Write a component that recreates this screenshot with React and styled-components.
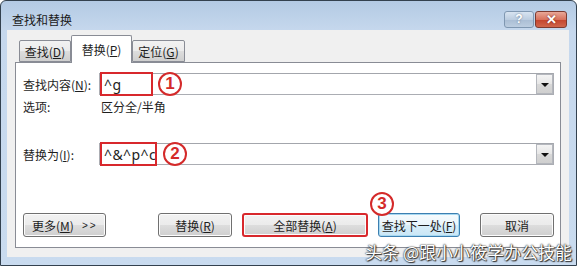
import React from "react"
import styled, { createGlobalStyle } from "styled-components"

const GlobalStyle = createGlobalStyle`
  html, body {
    margin: 0;
    padding: 0;
    background: #ffffff;
  }
  body {
    font-family: "Noto Sans CJK SC", "Noto Sans", sans-serif;
    font-size: 12px;
    color: #1e1e1e;
  }
`

const Window = styled.div`
  position: relative;
  width: 577px;
  height: 266px;
  box-sizing: border-box;
  display: flex;
  flex-direction: column;
  background: linear-gradient(#b3cae4, #c6d8ed 30px, #c9dbef);
  border: 1px solid #33414f;
  border-radius: 6px 6px 0 0;
  overflow: hidden;
`

const TitleBar = styled.div`
  height: 29px;
  box-sizing: border-box;
  padding: 7px 9px 0 11px;
  display: flex;
  align-items: center;
  flex-shrink: 0;
`

const Title = styled.div`
  flex: 1;
  font-size: 12px;
  color: #1a1a1a;
`

const CaptionButton = styled.div`
  width: ${p => (p.$close ? 32 : 30)}px;
  height: 17px;
  box-sizing: border-box;
  border: 1px solid ${p => (p.$close ? "#7d3a30" : "#7f97b1")};
  border-radius: 3px;
  margin-left: 1px;
  display: flex;
  align-items: center;
  justify-content: center;
  color: #ffffff;
  font-family: "Liberation Sans", sans-serif;
  font-weight: bold;
  font-size: ${p => (p.$close ? 13 : 12)}px;
  background: ${p =>
    p.$close
      ? "linear-gradient(#e9a898, #d8725d 50%, #c4432c 51%, #d0664c)"
      : "linear-gradient(#d8e4f1, #bccde0 50%, #a9bdd4 51%, #bccde0)"};
  text-shadow: 0 0 2px ${p => (p.$close ? "#6b1e10" : "#5b7089")};
`

const Client = styled.div`
  flex: 1;
  margin: 0 7px 8px 6px;
  padding: 5px 8px 9px 8px;
  background: #f0f0f0;
  display: flex;
  flex-direction: column;
`

const TabRow = styled.div`
  display: flex;
  align-items: flex-end;
  height: 27px;
  padding-left: 4px;
`

const Tab = styled.div`
  position: relative;
  width: ${p => p.$w}px;
  height: ${p => (p.$active ? 28 : 22)}px;
  margin-bottom: ${p => (p.$active ? -1 : 0)}px;
  z-index: ${p => (p.$active ? 1 : 0)};
  box-sizing: border-box;
  border: 1px solid #898c95;
  border-bottom: ${p => (p.$active ? "none" : "1px solid #898c95")};
  border-radius: 2px 2px 0 0;
  display: flex;
  align-items: center;
  justify-content: center;
  font-size: 12px;
  background: ${p =>
    p.$active
      ? "#ffffff"
      : "linear-gradient(#f2f2f2, #ebebeb 50%, #dddddd 51%, #cfcfcf)"};
  padding-top: ${p => (p.$active ? 0 : 1)}px;
`

const Panel = styled.div`
  height: 186px;
  box-sizing: border-box;
  border: 1px solid #898c95;
  background: #ffffff;
  padding: 10px 6px 0 7px;
  display: flex;
  flex-direction: column;
`

const FieldRow = styled.div`
  display: grid;
  grid-template-columns: 76px 1fr;
  align-items: center;
  margin-top: ${p => p.$top || 0}px;
`

const Label = styled.div`
  font-size: 12px;
  white-space: nowrap;
`

const Combo = styled.div`
  position: relative;
  height: 22px;
  box-sizing: border-box;
  border: 1px solid #abadb3;
  border-top-color: #a3a6ac;
  display: flex;
  align-items: center;
`

const Mark = styled.div`
  width: ${p => p.$w}px;
  height: 24px;
  box-sizing: border-box;
  border: 2px solid #d8282c;
  padding-left: 2px;
  display: flex;
  align-items: center;
  overflow: hidden;
  white-space: nowrap;
  font-family: "Noto Sans", sans-serif;
  font-size: 14px;
  letter-spacing: 0.4px;
  color: #222;
`

const Circle = styled.div`
  width: ${p => p.$size || 24}px;
  height: ${p => p.$size || 24}px;
  box-sizing: border-box;
  border: 2.5px solid #d42a2a;
  border-radius: 50%;
  margin-left: ${p => p.$left || 0}px;
  display: flex;
  align-items: center;
  justify-content: center;
  color: #d42a2a;
  font-family: "Liberation Sans", sans-serif;
  font-weight: bold;
  font-size: 17px;
  background: #ffffff;
`

const DropButton = styled.div`
  margin-left: auto;
  width: 17px;
  height: 20px;
  box-sizing: border-box;
  border: 1px solid #b4b7bd;
  background: linear-gradient(#f4f4f4, #e6e6e6 50%, #d8d8d8 51%, #cfcfcf);
  display: flex;
  align-items: center;
  justify-content: center;
`

const Arrow = styled.div`
  width: 0;
  height: 0;
  border-left: 4px solid transparent;
  border-right: 4px solid transparent;
  border-top: 4px solid #111;
  margin-top: 1px;
`

const OptionValue = styled.div`
  padding-left: 2px;
  font-size: 12px;
`

const ButtonRow = styled.div`
  display: flex;
  align-items: center;
  margin-top: 48px;
`

const Button = styled.div`
  position: relative;
  width: ${p => p.$w}px;
  height: 24px;
  box-sizing: border-box;
  margin-left: ${p => p.$gap || 0}px;
  margin-right: ${p => (p.$push ? "auto" : "0")};
  border: ${p =>
    p.$marked ? "2px solid #d8282c" : p.$focus ? "1px solid #3c7fb1" : "1px solid #707070"};
  border-radius: 3px;
  display: flex;
  align-items: center;
  justify-content: ${p => (p.$start ? "flex-start" : "center")};
  padding-left: ${p => (p.$start ? 8 : 0)}px;
  font-size: 12px;
  color: #1e1e1e;
  white-space: nowrap;
  background: ${p =>
    p.$focus
      ? "linear-gradient(#f6fbfd, #eaf5fb 50%, #d9eef8 51%, #c9e6f6)"
      : "linear-gradient(#f2f2f2, #ebebeb 50%, #dddddd 51%, #cfcfcf)"};
  box-shadow: ${p => (p.$focus ? "inset 0 0 0 1px #a7d8f0" : "inset 0 0 0 1px #fcfcfc")};
`

const Chevrons = styled.span`
  margin-left: 8px;
  font-family: "Liberation Sans", sans-serif;
  font-size: 10px;
  letter-spacing: 2px;
`

const Badge = styled(Circle)`
  position: absolute;
  left: -9px;
  top: -22px;
  margin: 0;
`

const Watermark = styled.div`
  position: absolute;
  right: 4px;
  bottom: 3px;
  font-size: 17px;
  line-height: 20px;
  color: #ffffff;
  white-space: nowrap;
  text-shadow: 0 0 1px #222, 0 0 2px #333, 1px 1px 1px #333;
`

const App = () => {
  return (
    <>
      <GlobalStyle />
      <Window>
        <TitleBar>
          <Title>查找和替换</Title>
          <CaptionButton>?</CaptionButton>
          <CaptionButton $close>✕</CaptionButton>
        </TitleBar>
        <Client>
          <TabRow>
            <Tab $w={52}>
              查找(<u>D</u>)
            </Tab>
            <Tab $w={61} $active>
              替换(<u>P</u>)
            </Tab>
            <Tab $w={53}>
              定位(<u>G</u>)
            </Tab>
          </TabRow>
          <Panel>
            <FieldRow>
              <Label>
                查找内容(<u>N</u>):
              </Label>
              <Combo>
                <Mark $w={53}>^g</Mark>
                <Circle $left={5}>1</Circle>
                <DropButton>
                  <Arrow />
                </DropButton>
              </Combo>
            </FieldRow>
            <FieldRow $top={3}>
              <Label>选项:</Label>
              <OptionValue>区分全/半角</OptionValue>
            </FieldRow>
            <FieldRow $top={28}>
              <Label>
                替换为(<u>I</u>):
              </Label>
              <Combo>
                <Mark $w={57}>^&amp;^p^c</Mark>
                <Circle $left={6}>2</Circle>
                <DropButton>
                  <Arrow />
                </DropButton>
              </Combo>
            </FieldRow>
            <ButtonRow>
              <Button $w={83} $push $start>
                更多(<u>M</u>)<Chevrons>&gt;&gt;</Chevrons>
              </Button>
              <Button $w={74}>
                替换(<u>R</u>)
              </Button>
              <Button $w={126} $gap={10} $marked>
                全部替换(<u>A</u>)
              </Button>
              <Button $w={82} $gap={10} $focus>
                <Badge>3</Badge>
                查找下一处(<u>F</u>)
              </Button>
              <Button $w={74} $gap={20}>
                取消
              </Button>
            </ButtonRow>
          </Panel>
        </Client>
        <Watermark>头条 @跟小小筱学办公技能</Watermark>
      </Window>
    </>
  )
}

export default App
